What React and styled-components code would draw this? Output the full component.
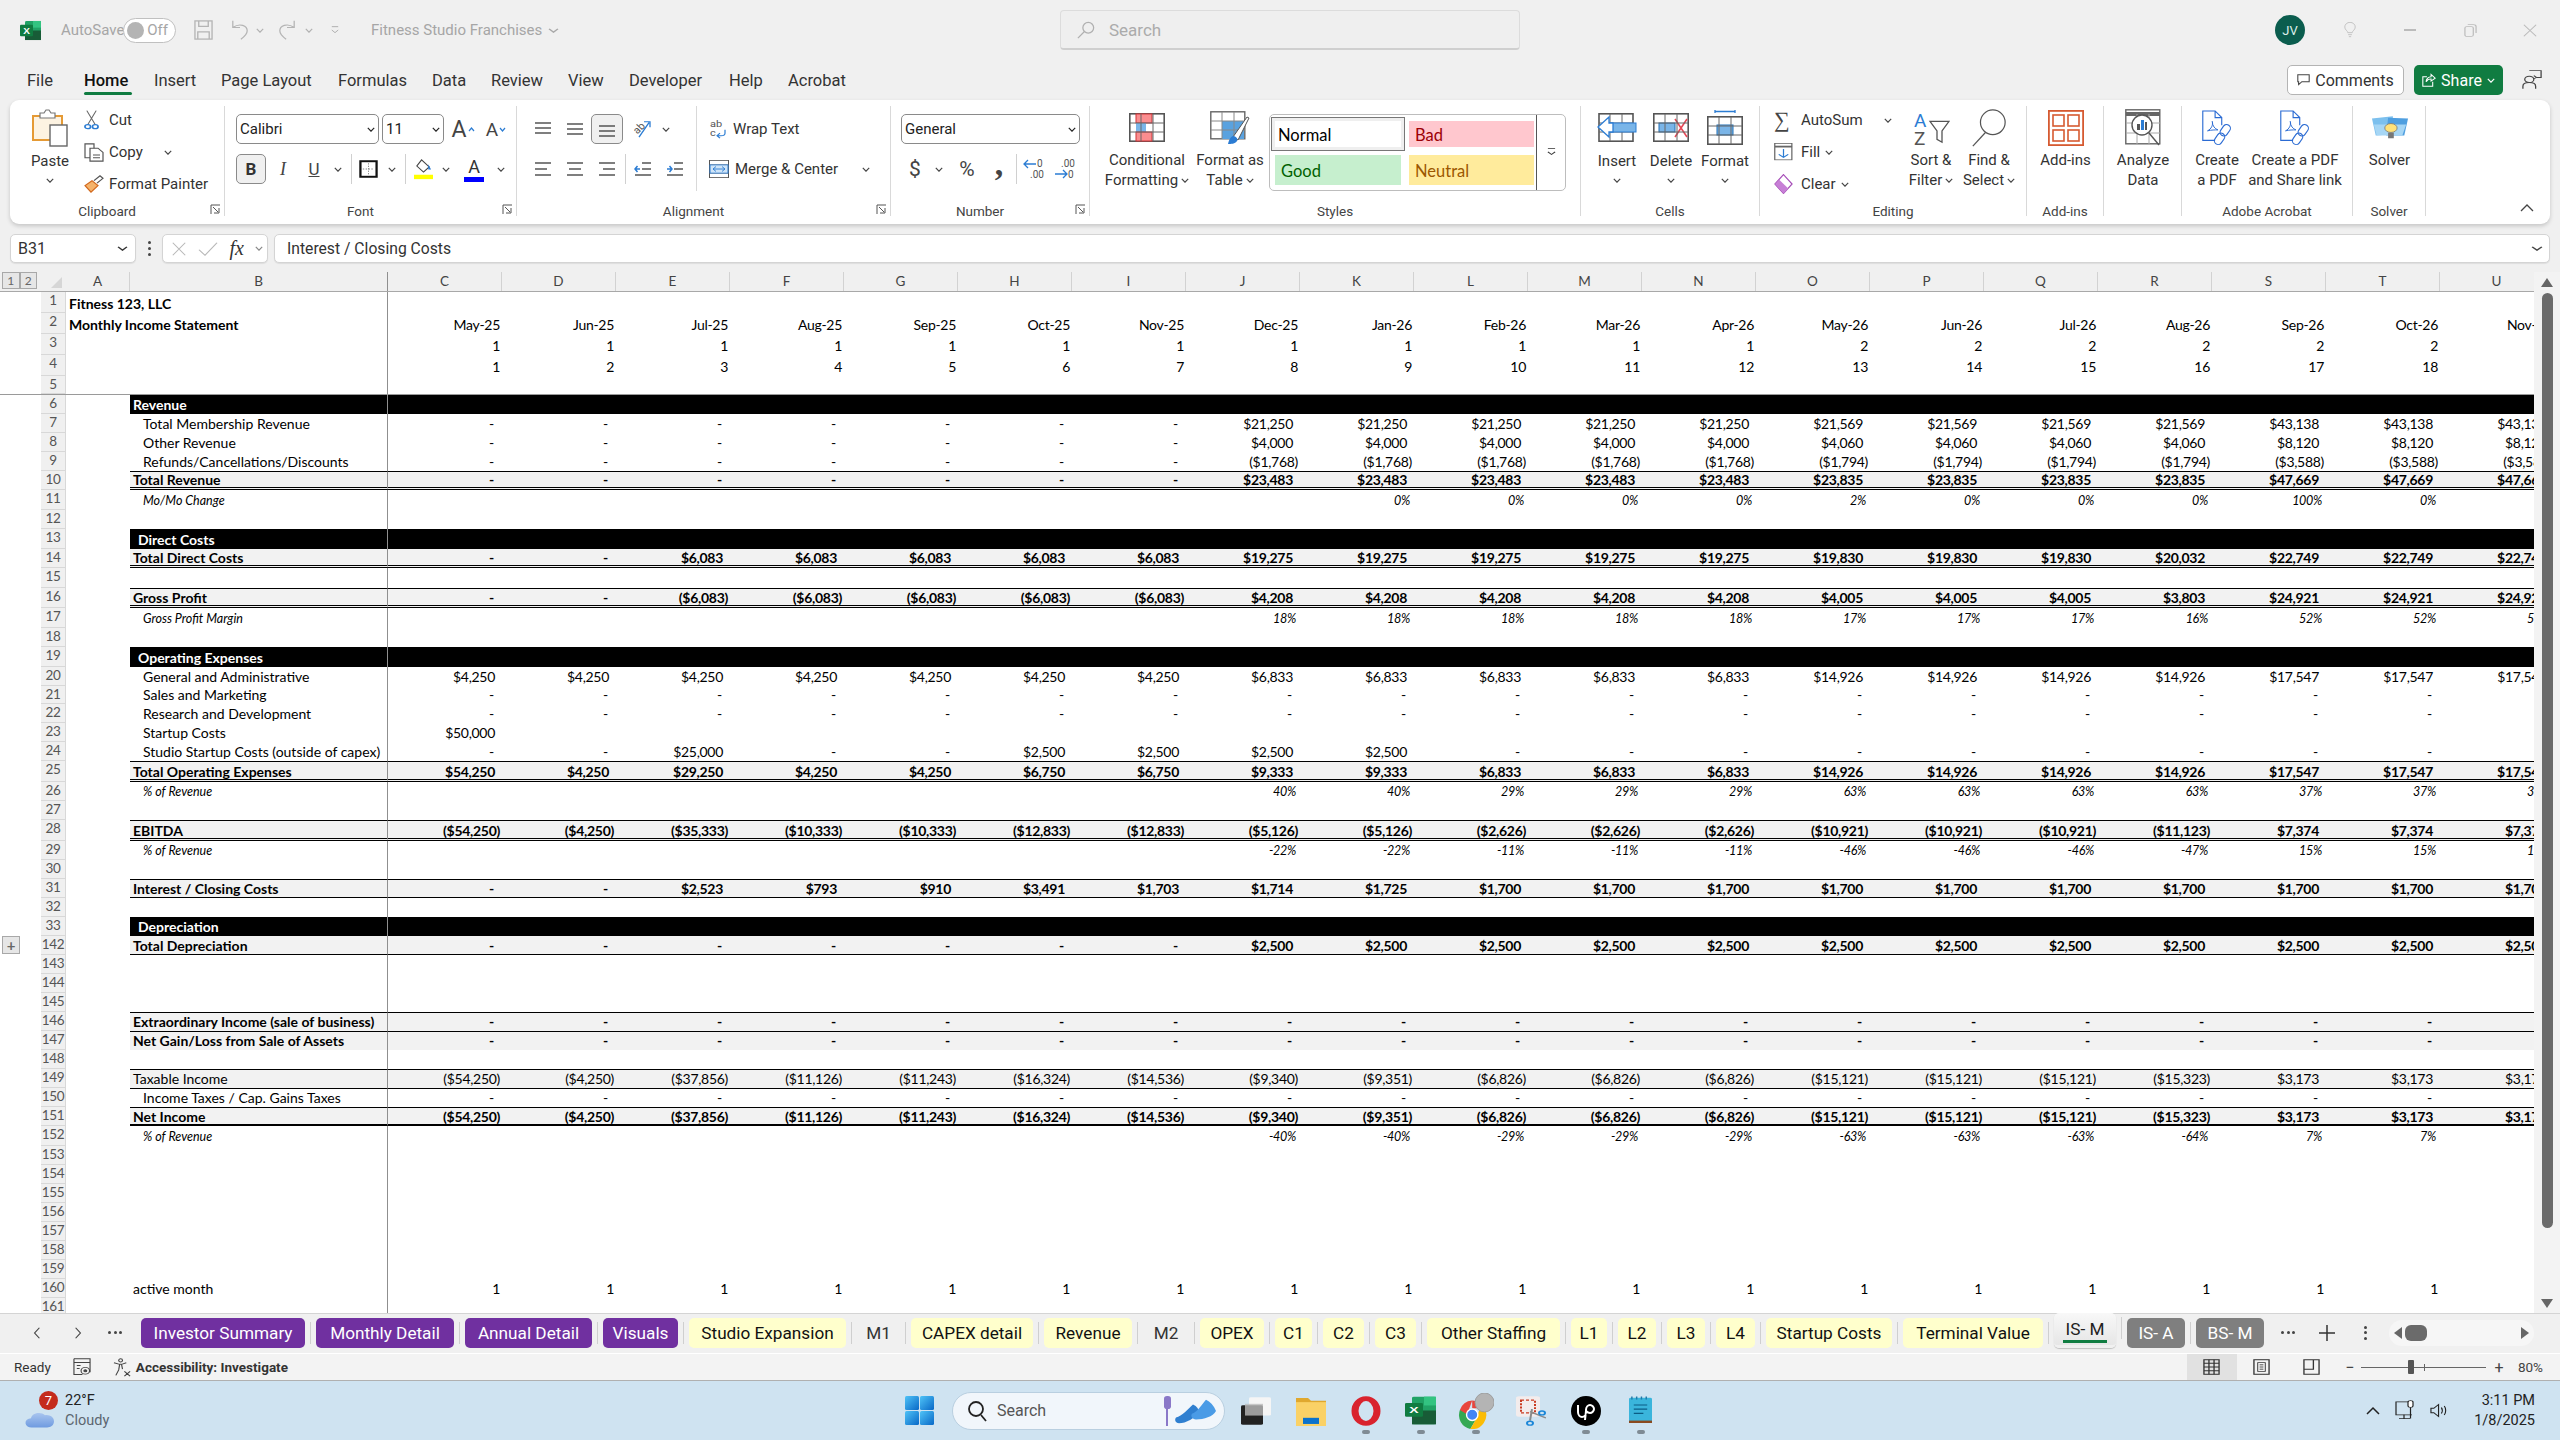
import styled, { createGlobalStyle, css } from 'styled-components';

const UI = `"Roboto", "Open Sans", sans-serif`;
const CELL = `"Lato", "Open Sans", sans-serif`;

const rep = (v, n) => Array(n).fill(v);
const MONTHS = ['May-25', 'Jun-25', 'Jul-25', 'Aug-25', 'Sep-25', 'Oct-25', 'Nov-25', 'Dec-25', 'Jan-26', 'Feb-26', 'Mar-26', 'Apr-26', 'May-26', 'Jun-26', 'Jul-26', 'Aug-26', 'Sep-26', 'Oct-26', 'Nov-26'];
const COLS = 'ABCDEFGHIJKLMNOPQRSTU'.split('');
const dashes = rep('-', 19);
const blank = (n) => rep('', n);

const taxable = ['($54,250)', '($4,250)', '($37,856)', '($11,126)', '($11,243)', '($16,324)', '($14,536)', '($9,340)', '($9,351)', '($6,826)', '($6,826)', '($6,826)', '($15,121)', '($15,121)', '($15,121)', '($15,323)', '$3,173', '$3,173', '$3,173'];

const ROWS = [
  { n: '1', h: 20.5, title: 'Fitness 123, LLC' },
  { n: '2', h: 21, title: 'Monthly Income Statement', vals: MONTHS },
  { n: '3', h: 21, vals: [...rep('1', 12), ...rep('2', 7)] },
  { n: '4', h: 21, vals: Array.from({ length: 19 }, (_, i) => String(i + 1)) },
  { n: '5', h: 19, freeze: true },
  { n: '6', h: 19.2, band: true, label: 'Revenue' },
  { n: '7', label: 'Total Membership Revenue', indent: 13, vals: [...rep('-', 7), ...rep('$21,250', 5), ...rep('$21,569', 4), ...rep('$43,138', 3)] },
  { n: '8', label: 'Other Revenue', indent: 13, vals: [...rep('-', 7), ...rep('$4,000', 5), ...rep('$4,060', 4), ...rep('$8,120', 3)] },
  { n: '9', label: 'Refunds/Cancellations/Discounts', indent: 13, vals: [...rep('-', 7), ...rep('($1,768)', 5), ...rep('($1,794)', 4), ...rep('($3,588)', 3)] },
  { n: '10', h: 19.3, label: 'Total Revenue', fill: true, bold: true, top: true, bottom: 'double', vals: [...rep('-', 7), ...rep('$23,483', 5), ...rep('$23,835', 4), ...rep('$47,669', 3)] },
  { n: '11', h: 20, label: 'Mo/Mo Change', note: true, indent: 13, vals: [...blank(8), '0%', '0%', '0%', '0%', '2%', '0%', '0%', '0%', '100%', '0%', '0%'] },
  { n: '12' },
  { n: '13', h: 20, band: true, label: 'Direct Costs', indent: 8 },
  { n: '14', h: 19.3, label: 'Total Direct Costs', fill: true, bold: true, bottom: 'double', vals: ['-', '-', ...rep('$6,083', 5), ...rep('$19,275', 5), ...rep('$19,830', 3), '$20,032', ...rep('$22,749', 3)] },
  { n: '15', h: 20 },
  { n: '16', h: 20, label: 'Gross Profit', fill: true, bold: true, top: true, bottom: 'double', vals: ['-', '-', ...rep('($6,083)', 5), ...rep('$4,208', 5), ...rep('$4,005', 3), '$3,803', ...rep('$24,921', 3)] },
  { n: '17', h: 19.4, label: 'Gross Profit Margin', note: true, indent: 13, vals: [...blank(7), ...rep('18%', 5), ...rep('17%', 3), '16%', ...rep('52%', 3)] },
  { n: '18' },
  { n: '19', h: 20, band: true, label: 'Operating Expenses', indent: 8 },
  { n: '20', h: 18.9, label: 'General and Administrative', indent: 13, vals: [...rep('$4,250', 7), ...rep('$6,833', 5), ...rep('$14,926', 4), ...rep('$17,547', 3)] },
  { n: '21', h: 18.9, label: 'Sales and Marketing', indent: 13, vals: dashes },
  { n: '22', h: 18.9, label: 'Research and Development', indent: 13, vals: dashes },
  { n: '23', h: 18.9, label: 'Startup Costs', indent: 13, vals: ['$50,000'] },
  { n: '24', h: 18.9, label: 'Studio Startup Costs (outside of capex)', indent: 13, vals: ['-', '-', '$25,000', '-', '-', '$2,500', '$2,500', '$2,500', '$2,500', ...rep('-', 10)] },
  { n: '25', h: 20.7, label: 'Total Operating Expenses', fill: true, bold: true, top: true, bottom: 'double', vals: ['$54,250', '$4,250', '$29,250', '$4,250', '$4,250', '$6,750', '$6,750', '$9,333', '$9,333', ...rep('$6,833', 3), ...rep('$14,926', 4), ...rep('$17,547', 3)] },
  { n: '26', h: 19.3, label: '% of Revenue', note: true, indent: 13, vals: [...blank(7), '40%', '40%', '29%', '29%', '29%', '63%', '63%', '63%', '63%', '37%', '37%', '37%'] },
  { n: '27' },
  { n: '28', h: 20.7, label: 'EBITDA', fill: true, bold: true, top: true, bottom: 'double', vals: ['($54,250)', '($4,250)', '($35,333)', '($10,333)', '($10,333)', '($12,833)', '($12,833)', '($5,126)', '($5,126)', '($2,626)', '($2,626)', '($2,626)', '($10,921)', '($10,921)', '($10,921)', '($11,123)', '$7,374', '$7,374', '$7,374'] },
  { n: '29', h: 19.3, label: '% of Revenue', note: true, indent: 13, vals: [...blank(7), '-22%', '-22%', '-11%', '-11%', '-11%', '-46%', '-46%', '-46%', '-47%', '15%', '15%', '15%'] },
  { n: '30' },
  { n: '31', label: 'Interest / Closing Costs', fill: true, bold: true, top: true, bottom: 'single', vals: ['-', '-', '$2,523', '$793', '$910', '$3,491', '$1,703', '$1,714', '$1,725', ...rep('$1,700', 10)] },
  { n: '32', h: 18.7 },
  { n: '33', h: 19.7, band: true, label: 'Depreciation', indent: 8 },
  { n: '142', plus: true, label: 'Total Depreciation', fill: true, bold: true, bottom: 'single', vals: [...rep('-', 7), ...rep('$2,500', 12)] },
  { n: '143', h: 18.9 },
  { n: '144', h: 18.9 },
  { n: '145', h: 18.9 },
  { n: '146', label: 'Extraordinary Income (sale of business)', fill: true, bold: true, top: true, vals: dashes },
  { n: '147', h: 19.3, label: 'Net Gain/Loss from Sale of Assets', fill: true, bold: true, top: true, vals: dashes },
  { n: '148', h: 18.6 },
  { n: '149', label: 'Taxable Income', fill: true, top: true, vals: taxable },
  { n: '150', label: 'Income Taxes / Cap. Gains Taxes', indent: 13, top: true, vals: dashes },
  { n: '151', h: 19.4, label: 'Net Income', fill: true, bold: true, top: true, bottom: 'thick', vals: taxable },
  { n: '152', h: 19.3, label: '% of Revenue', note: true, indent: 13, vals: [...blank(7), '-40%', '-40%', '-29%', '-29%', '-29%', '-63%', '-63%', '-63%', '-64%', '7%', '7%', '7%'] },
  ...['153', '154', '155', '156', '157', '158', '159'].map((n) => ({ n })),
  { n: '160', label: 'active month', vals: rep('1', 19) },
  { n: '161', h: 15 },
];

const valuePad = (v, note) => {
  if (note) return 4;
  if (v === '-') return 8;
  if (v.startsWith('$')) return 7;
  return 2;
};

const SHEET_TABS = [
  ['Investor Summary', 164, 'purple'], ['Monthly Detail', 138, 'purple'], ['Annual Detail', 127, 'purple'], ['Visuals', 75, 'purple'],
  ['Studio Expansion', 157, 'yellow'], ['M1', 43, 'plain'], ['CAPEX detail', 122, 'yellow'], ['Revenue', 88, 'yellow'], ['M2', 46, 'plain'],
  ['OPEX', 64, 'yellow'], ['C1', 37, 'yellow'], ['C2', 41, 'yellow'], ['C3', 41, 'yellow'], ['Other Staffing', 133, 'yellow'],
  ['L1', 36, 'yellow'], ['L2', 38, 'yellow'], ['L3', 38, 'yellow'], ['L4', 39, 'yellow'], ['Startup Costs', 126, 'yellow'],
  ['Terminal Value', 140, 'yellow'], ['IS- M', 62, 'active'], ['IS- A', 58, 'gray'], ['BS- M', 68, 'gray'],
];

const RIBBON_TABS = [['File', 57], ['Home', 70], ['Insert', 67], ['Page Layout', 117], ['Formulas', 94], ['Data', 59], ['Review', 77], ['View', 61], ['Developer', 100], ['Help', 59], ['Acrobat', 70]];

const NONE = 'none';

/* ---- drawn icons ---- */
const Chev = ({ c = '#444', w = 8 }) => (
  <svg width={w} height="5" viewBox="0 0 10 6" fill="none" preserveAspectRatio={NONE}><path d="M1 1l4 4 4-4" stroke={c} strokeWidth="1.5" /></svg>
);

const ExcelLogo = () => (
  <svg width="21" height="21" viewBox="0 0 21 22" preserveAspectRatio={NONE}>
    <rect x="5" y="1" width="16" height="20" rx="1.5" fill="#21a366" />
    <rect x="13" y="1" width="8" height="7" fill="#33c481" />
    <rect x="5" y="11" width="16" height="10" fill="#185c37" />
    <rect x="0" y="5" width="13" height="12" rx="1" fill="#107c41" />
    <text x="6.5" y="14.5" fontSize="10" fontWeight="700" fill="#fff" textAnchor="middle" fontFamily="Liberation Sans">X</text>
  </svg>
);
const SaveIcon = () => (
  <svg width="19" height="20" viewBox="0 0 20 22" fill="none" stroke="#b4b4b4" strokeWidth="1.4" preserveAspectRatio={NONE}><rect x="1" y="1" width="18" height="20" /><path d="M5 1v6h10V1M4 21v-8h12v8" /></svg>
);
const UndoIcon = ({ flip }) => (
  <svg width="18" height="20" viewBox="0 0 20 24" fill="none" stroke="#b4b4b4" strokeWidth="1.4" preserveAspectRatio={NONE} transform={flip ? 'scale(-1 1)' : undefined}><path d="M2 1v8h8M2 9c8-6 16-2 16 4 0 4-3 7-7 10" /></svg>
);
const QuickIcon = () => (
  <svg width="8" height="8" viewBox="0 0 10 12" fill="none" stroke="#a8a8a8" strokeWidth="1.2" preserveAspectRatio={NONE}><path d="M1 1h8M1 6l4 4 4-4" /></svg>
);
const SearchGlass = ({ c = '#b0b0b0', s = 18 }) => (
  <svg width={s} height={s} viewBox="0 0 20 20" fill="none" stroke={c} strokeWidth="1.4"><circle cx="12.5" cy="7.5" r="6" /><path d="M8 12l-7 7" /></svg>
);
const Bulb = () => (
  <svg width="12" height="16" viewBox="0 0 16 24" fill="none" stroke="#c0c0c0" strokeWidth="1.3" preserveAspectRatio={NONE}><path d="M5 16c0-3-4-4-4-8.500a7 7 0 0 1 14 0C15 12 11 13 11 16zM5.500 19h5M6.500 22h3" /></svg>
);
const CommentIcon = ({ c = '#444' }) => (
  <svg width="13" height="12" viewBox="0 0 16 17" fill="none" stroke={c} strokeWidth="1.3" preserveAspectRatio={NONE}><path d="M1 1h14v10H6l-4 4v-4H1z" /></svg>
);
const ShareIcon = () => (
  <svg width="14" height="14" viewBox="0 0 17 19" fill="none" stroke="#fff" strokeWidth="1.3" preserveAspectRatio={NONE}><path d="M6 5H1v13h12v-6M5 12c0-4 3-7 6-7V2l5 5-5 4V8c-3 0-5 2-6 4z" /></svg>
);
const FeedbackIcon = () => (
  <svg width="20" height="20" viewBox="0 0 22 32" fill="none" stroke="#444" strokeWidth="1.4" preserveAspectRatio={NONE}><path d="M8 1h13v11h-5" /><circle cx="8" cy="15" r="5" /><path d="M1 30v-4c0-4 3-6 7-6s7 2 7 6v4M13 9l3 3-3 2" /></svg>
);
const PasteIcon = () => (
  <svg width="36" height="38" viewBox="0 0 36 38" fill="none">
    <path d="M1 7h29v24H1z" fill="#fdf3e2" stroke="#e59a35" strokeWidth="2" />
    <path d="M8 7V4h4l2-3h3l2 3h4v5H8z" fill="#fff" stroke="#777" strokeWidth="1.2" />
    <rect x="18" y="16" width="17" height="21" fill="#fff" stroke="#666" strokeWidth="1.4" />
  </svg>
);
const CutIcon = () => (
  <svg width="15" height="20" viewBox="0 0 16 30" fill="none" preserveAspectRatio={NONE}><path d="M3 1l9 21M13 1L4 22" stroke="#666" strokeWidth="1.2" /><circle cx="4" cy="25" r="3" stroke="#2b7cd3" strokeWidth="1.8" /><circle cx="12" cy="25" r="3" stroke="#2b7cd3" strokeWidth="1.8" /></svg>
);
const CopyIcon = () => (
  <svg width="20" height="19" viewBox="0 0 20 22" fill="#fff" stroke="#555" strokeWidth="1.2" preserveAspectRatio={NONE}><path d="M1 1h9v16H1z" /><path d="M6 6h8l5 5v10H6z" /><path d="M9 14h7M9 17h7" /></svg>
);
const PainterIcon = () => (
  <svg width="20" height="18" viewBox="0 0 20 22" fill="none" preserveAspectRatio={NONE}><path d="M1 13l7-6 6 6-7 8z" fill="#f5b36b" stroke="#d2691e" strokeWidth="1.3" /><path d="M10 7l6-6 3 3-6 6" stroke="#555" strokeWidth="1.3" fill="#fff" /></svg>
);
const Launcher = () => (
  <svg width="11" height="11" viewBox="0 0 11 11" fill="none" stroke="#555"><path d="M1 10V1h9" /><path d="M3 3l5 5M9 4v5H4" /></svg>
);
const Caret = ({ down }) => (
  <svg width="7" height="5" viewBox="0 0 7 5" fill="none" stroke="#2b7cd3" strokeWidth="1.2"><path d={down ? 'M1 1l2.500 3L6 1' : 'M1 4l2.500-3L6 4'} /></svg>
);
const BorderIcon = () => (
  <svg width="19" height="18" viewBox="0 0 20 22" fill="none" preserveAspectRatio={NONE}><rect x="1.500" y="1.500" width="17" height="19" stroke="#111" strokeWidth="2.400" /><path d="M10 4v14M4 11h12" stroke="#777" strokeDasharray="1.500 1.500" /></svg>
);
const FillIcon = () => (
  <svg width="19" height="21" viewBox="0 0 20 24" fill="none" preserveAspectRatio={NONE}><path d="M8 1l8 8-6 6-7-7z" stroke="#444" strokeWidth="1.2" fill="#fff" /><path d="M15 6l3 6h-3z" fill="#2b7cd3" /><rect y="18" width="20" height="5" fill="#ffff00" /></svg>
);
const AlignIcon = ({ y = [4, 10, 16], x = [[1, 17], [1, 17], [1, 17]], tint }) => (
  <svg width="18" height="20" viewBox="0 0 18 20" fill="none" stroke="#555" strokeWidth="1.5">
    {y.map((v, i) => <path key={v} d={`M${x[i][0]} ${v}H${x[i][1]}`} />)}
    {tint}
  </svg>
);
const OrientIcon = () => (
  <svg width="22" height="20" viewBox="0 0 22 22" fill="none" preserveAspectRatio={NONE}><text x="4" y="15" fontSize="11" fill="#555" transform="rotate(-45 8 12)" fontFamily="Roboto">ab</text><path d="M9 20L19 4M14 3h6v6" stroke="#2b7cd3" strokeWidth="1.3" /></svg>
);
const WrapIcon = () => (
  <svg width="18" height="20" viewBox="0 0 18 24" fill="none" preserveAspectRatio={NONE}><text x="1" y="10" fontSize="11" fill="#555" fontFamily="Roboto">ab</text><text x="1" y="21" fontSize="11" fill="#555" fontFamily="Roboto">c</text><path d="M16 13v4c0 2-2 3-4 3H8m3-3l-3 3 3 3" stroke="#2b7cd3" strokeWidth="1.2" /></svg>
);
const MergeIcon = () => (
  <svg width="20" height="18" viewBox="0 0 20 22" fill="#fff" stroke="#555" preserveAspectRatio={NONE}><rect x=".5" y=".5" width="19" height="21" /><path d="M1 6h18M1 16h18" /><rect x="1" y="6" width="18" height="10" fill="#cfe4f7" stroke="#2b7cd3" /><path d="M4 11h12M7 8l-3 3 3 3M13 8l3 3-3 3" stroke="#2b7cd3" fill="none" /></svg>
);
const DecIcon = ({ flip }) => (
  <svg width="22" height="22" viewBox="0 0 22 22" fill="none">
    <text x={flip ? 7 : 14} y="9" fontSize="10" fill="#555" fontFamily="Roboto">{flip ? '.00' : '0'}</text>
    <text x={flip ? 14 : 7} y="20" fontSize="10" fill="#555" fontFamily="Roboto">{flip ? '0' : '.00'}</text>
    {flip
      ? <path d="M1 16h12M9 12l4 4-4 4" stroke="#2b7cd3" strokeWidth="1.3" />
      : <path d="M13 6H1M5 2L1 6l4 4" stroke="#2b7cd3" strokeWidth="1.3" />}
  </svg>
);
const SheetGrid = ({ children }) => (
  <svg width="36" height="30" viewBox="0 0 36 30" fill="none">
    <rect x=".8" y=".8" width="34.400" height="27.400" fill="#fff" stroke="#555" strokeWidth="1.6" />
    {children}
    <path d="M12 1v27M24 1v27M1 10h34M1 19h34" stroke="#666" strokeWidth="1" />
  </svg>
);
const CondIcon = () => (
  <SheetGrid><rect x="7" y="1" width="16" height="9" fill="#fa8d8f" stroke="#d13438" /><rect x="7" y="10" width="10" height="9" fill="#7ab5e8" /><rect x="7" y="19" width="16" height="9" fill="#fa8d8f" stroke="#d13438" /></SheetGrid>
);
const TableIcon = () => (
  <svg width="40" height="34" viewBox="0 0 40 34" fill="none">
    <rect x=".8" y=".8" width="34" height="27" fill="#fff" stroke="#666" strokeWidth="1.4" />
    <rect x="12" y="10" width="22" height="18" fill="#5aa2df" />
    <path d="M12 1v27M24 1v27M1 10h34M1 19h34" stroke="#888" />
    <path d="M23 26L37 6l2 1-11 22z" fill="#fff" stroke="#555" />
    <path d="M18 33c1-5 3-8 6-8 3 1 4 3 3 5-2 3-6 3-9 3z" fill="#2b7cd3" />
  </svg>
);
const InsertIcon = () => (
  <svg width="40" height="30" viewBox="0 0 40 30" fill="none">
    <rect x="2" y=".8" width="34" height="27.400" fill="#fff" stroke="#555" strokeWidth="1.6" />
    <path d="M13 1v27M25 1v27M2 10h34M2 19h34" stroke="#666" />
    <rect x="13" y="10" width="26" height="9" fill="#7ab5e8" stroke="#2b7cd3" />
    <path d="M12 4L1 14l11 10v-5h4v-9h-4z" fill="#fff" stroke="#2b7cd3" strokeWidth="1.300" />
  </svg>
);
const DeleteIcon = () => (
  <SheetGrid><rect x="6" y="10" width="16" height="9" fill="#7ab5e8" stroke="#1f6fb5" /><path d="M22 6l12 18M34 6L22 24" stroke="#e74856" strokeWidth="1.600" /></SheetGrid>
);
const FormatIcon = () => (
  <svg width="36" height="36" viewBox="0 0 36 36" fill="none"><path d="M8 1.500h20M8 0v3M28 0v3" stroke="#2b7cd3" strokeWidth="1.300" /><rect x=".8" y="6.800" width="34.400" height="27.400" fill="#fff" stroke="#555" strokeWidth="1.600" /><rect x="10" y="15" width="16" height="10" fill="#7ab5e8" stroke="#1f6fb5" /><path d="M12 7v27M24 7v27M1 16h34M1 25h34" stroke="#666" /></svg>
);
const FillDown = () => (
  <svg width="19" height="18" viewBox="0 0 20 30" fill="#fff" stroke="#666" strokeWidth="1.300" preserveAspectRatio={NONE}><rect x=".8" y="1" width="18" height="27" /><path d="M1 6h18" strokeWidth="3" /><path d="M10 10v14M5 19l5 5 5-5" stroke="#2b7cd3" fill="none" /></svg>
);
const ClearIcon = () => (
  <svg width="19" height="20" viewBox="0 0 20 32" fill="none" preserveAspectRatio={NONE}><path d="M10 1l9 15-9 15L1 16z" fill="#fff" stroke="#a54bb7" strokeWidth="1.500" /><path d="M5.500 9L15 23l-5 8-9-15z" fill="#c77fd6" /></svg>
);
const SortIcon = () => (
  <svg width="38" height="36" viewBox="0 0 38 38" fill="none" preserveAspectRatio={NONE}>
    <text x="2" y="18" fontSize="19" fill="#2b7cd3" fontFamily="Roboto">A</text>
    <text x="2" y="37" fontSize="19" fill="#555" fontFamily="Roboto">Z</text>
    <path d="M18 12h19l-7 10v12l-5-3v-9z" fill="#fff" stroke="#555" strokeWidth="1.300" />
  </svg>
);
const FindIcon = () => (
  <svg width="36" height="38" viewBox="0 0 36 40" fill="none" stroke="#555" strokeWidth="1.300"><circle cx="22" cy="14" r="13" fill="#fff" /><path d="M14 25L1 39" /></svg>
);
const AddInsIcon = () => (
  <svg width="36" height="36" viewBox="0 0 36 36" fill="#fff" stroke="#d65a31" strokeWidth="1.600"><rect x=".8" y=".8" width="34.400" height="34.400" strokeWidth="2" /><rect x="5" y="5" width="11" height="11" /><rect x="20" y="5" width="11" height="11" /><rect x="5" y="20" width="11" height="11" /><rect x="20" y="20" width="11" height="11" /></svg>
);
const AnalyzeIcon = () => (
  <svg width="36" height="38" viewBox="0 0 36 38" fill="none">
    <rect x=".8" y=".8" width="34" height="34" fill="#fff" stroke="#666" strokeWidth="1.400" />
    <path d="M1 5h34" stroke="#666" strokeWidth="4" /><path d="M12 5v30M24 5v30M1 14h34M1 24h34" stroke="#aaa" />
    <circle cx="17" cy="16" r="10" fill="#fff" stroke="#555" strokeWidth="1.400" />
    <path d="M24 24l10 12" stroke="#555" strokeWidth="1.400" />
    <rect x="12" y="15" width="3" height="6" fill="#555" /><rect x="16" y="11" width="3" height="10" fill="#2b7cd3" /><rect x="20" y="13" width="2" height="8" fill="#555" />
  </svg>
);
const PdfIcon = () => (
  <svg width="32" height="36" viewBox="0 0 32 38" fill="none" stroke="#2b6bd3" strokeWidth="1.200">
    <path d="M14 32H1V1h13l7 7v8M14 1v7h7" fill="#fff" />
    <path d="M6 22c4-2 6-6 5-10 0 5 3 8 6 9-3 0-7 0-11 1z" strokeWidth="1" />
    <rect x="21" y="15" width="8" height="13" rx="4" transform="rotate(35 25 21)" />
    <rect x="15" y="24" width="8" height="13" rx="4" transform="rotate(35 19 30)" />
  </svg>
);
const SolverIcon = () => (
  <svg width="38" height="26" viewBox="0 0 40 38" fill="none" preserveAspectRatio={NONE}>
    <path d="M1 5l22-3v26l-18 2z" fill="#7cc0ee" /><path d="M18 4l21 1-4 25H16z" fill="#4f9fe0" /><path d="M3 14h34l-4 16H6z" fill="#a6d6f5" />
    <circle cx="21" cy="19" r="6.500" fill="#ffe27a" stroke="#777" /><path d="M18 26h6v8h-6z" fill="#777" />
  </svg>
);
const Macro = () => (
  <svg width="18" height="18" viewBox="0 0 19 24" fill="none" stroke="#444" strokeWidth="1.200" preserveAspectRatio={NONE}><path d="M1 1h17v18" /><path d="M1 1v21h9M1 6h17M4 10h4M4 14h3" /><circle cx="13" cy="17" r="4.500" /><circle cx="13" cy="17" r="1.500" fill="#444" /></svg>
);
const Access = () => (
  <svg width="19" height="19" viewBox="0 0 20 24" fill="none" stroke="#444" strokeWidth="1.200" preserveAspectRatio={NONE}><circle cx="8" cy="3" r="2" /><path d="M1 6l6 2h2l5-2M7 8l-1 7-3 7M9 8l1 6M12 17l6 6M18 17l-6 6" /></svg>
);
const ViewNormal = () => (
  <svg width="17" height="16" viewBox="0 0 18 22" fill="none" stroke="#333" strokeWidth="1.400" preserveAspectRatio={NONE}><rect x="1" y="1" width="16" height="20" /><path d="M6.300 1v20M11.700 1v20M1 6h16M1 11h16M1 16h16" /></svg>
);
const ViewLayout = () => (
  <svg width="17" height="16" viewBox="0 0 18 22" fill="none" stroke="#333" strokeWidth="1.400" preserveAspectRatio={NONE}><rect x="1" y="1" width="16" height="20" /><rect x="5" y="5" width="8" height="12" strokeWidth="1" /><path d="M7 8h4M7 11h4M7 14h4" strokeWidth="1" /></svg>
);
const ViewBreak = () => (
  <svg width="17" height="16" viewBox="0 0 18 22" fill="none" stroke="#333" strokeWidth="1.400" preserveAspectRatio={NONE}><path d="M1 1h16v20H1zM1 14h10V1" /></svg>
);
const Cloud = () => (
  <svg width="30" height="20" viewBox="0 0 30 26" preserveAspectRatio={NONE}><defs><linearGradient id="cl" x1="0" y1="0" x2="0" y2="1"><stop offset="0" stopColor="#a9c5ef" /><stop offset="1" stopColor="#6f9be0" /></linearGradient></defs><path d="M7 24a6 6 0 0 1-1-12c1-7 10-9 14-4 5-1 9 3 9 8 0 5-3 8-7 8z" fill="url(#cl)" /></svg>
);
const WinLogo = () => (
  <svg width="29" height="29" viewBox="0 0 29 29"><defs><linearGradient id="wn" x1="0" y1="0" x2="1" y2="1"><stop offset="0" stopColor="#4fc3f7" /><stop offset="1" stopColor="#0868c7" /></linearGradient></defs><rect width="14" height="14" fill="url(#wn)" rx="1.500" /><rect x="15" width="14" height="14" fill="url(#wn)" rx="1.500" /><rect y="15" width="14" height="14" fill="url(#wn)" rx="1.500" /><rect x="15" y="15" width="14" height="14" fill="url(#wn)" rx="1.500" /></svg>
);
const Shoes = () => (
  <svg width="56" height="32" viewBox="0 0 56 34" preserveAspectRatio={NONE}><rect x="2" y="1" width="7" height="14" rx="3" fill="#8a78c8" /><path d="M5 15v18" stroke="#8a78c8" strokeWidth="2" /><path d="M14 24c6-2 12-9 17-14 4 2 6 5 6 9-4 5-13 11-20 11-3 0-5-3-3-6z" fill="#2f7fd0" /><path d="M30 20c6-3 10-10 14-15 4 2 8 6 10 12-3 6-12 9-20 9-3 0-6-3-4-6z" fill="#4a9be6" /></svg>
);
const TaskView = () => (
  <svg width="30" height="30" viewBox="0 0 30 46" preserveAspectRatio={NONE}><rect x="8" y="2" width="22" height="28" rx="2" fill="#f5f5f5" /><rect x="0" y="14" width="22" height="30" rx="2" fill="#222" /><rect x="4" y="12" width="18" height="18" fill="#bbb" opacity=".8" /></svg>
);
const Folder = () => (
  <svg width="30" height="30" viewBox="0 0 30 44" preserveAspectRatio={NONE}><path d="M0 3h12l3 4h15v37H0z" fill="#e0a82e" /><path d="M0 9h30v35H0z" fill="#fad166" /><rect x="7" y="32" width="16" height="9" fill="#0a72cc" /></svg>
);
const Opera = () => (
  <svg width="30" height="30" viewBox="0 0 30 46" fill="none" preserveAspectRatio={NONE}><ellipse cx="15" cy="23" rx="11" ry="19" stroke="#d9232e" strokeWidth="7" /></svg>
);
const ExcelTask = () => (
  <svg width="31" height="29" viewBox="0 0 31 46" preserveAspectRatio={NONE}><rect x="7" y="1" width="24" height="44" rx="2" fill="#21a366" /><rect x="19" y="1" width="12" height="14" fill="#33c481" /><rect x="7" y="23" width="24" height="22" fill="#185c37" /><rect y="11" width="18" height="22" rx="1.500" fill="#107c41" /><text x="9" y="27" fontSize="14" fontWeight="700" fill="#fff" textAnchor="middle" fontFamily="Liberation Sans">X</text></svg>
);
const Chrome = () => (
  <svg width="36" height="36" viewBox="0 0 38 38"><path d="M15 8a15 15 0 0 1 13 8H15z" fill="#e8453c" /><path d="M2 18A15 15 0 0 1 15 8l-3 8-5 14z" fill="#e8453c" /><path d="M2 18a15 15 0 0 0 11 20l7-12-8-2z" fill="#34a853" /><path d="M28 16a15 15 0 0 1-15 22l7-12 3-10z" fill="#fbbc05" /><circle cx="15" cy="23" r="6" fill="#4285f4" stroke="#fff" strokeWidth="1.500" /><rect x="18" y="0" width="20" height="20" rx="10" fill="#b4b4b4" stroke="#9c9c9c" /></svg>
);
const Snip = () => (
  <svg width="30" height="32" viewBox="0 0 30 50" fill="none" preserveAspectRatio={NONE}><rect x="0" y="2" width="24" height="32" rx="3" fill="#f3ecec" /><rect x="5" y="8" width="14" height="20" stroke="#c93a20" strokeWidth="2" strokeDasharray="3 2" /><path d="M16 22l-2 18M14 26l16 10" stroke="#8a8a8a" strokeWidth="2" /><circle cx="14" cy="44" r="3" stroke="#1a86d8" strokeWidth="2" /><circle cx="26" cy="28" r="3" stroke="#1a86d8" strokeWidth="2" /></svg>
);
const Upwork = () => (
  <svg width="30" height="30" viewBox="0 0 30 30"><circle cx="15" cy="15" r="15" fill="#000" /><path d="M7 9v7c0 3 2 5 4 5s4-2 4-5v-2c0-3 2-5 4-5s4 2 4 4-2 4-4 4-3-1-4-2l-1 9" stroke="#fff" strokeWidth="2" fill="none" /></svg>
);
const Notepad = () => (
  <svg width="23" height="30" viewBox="0 0 24 50" preserveAspectRatio={NONE}><rect x="0" y="3" width="24" height="40" rx="2" fill="#3ab5dc" /><rect x="0" y="41" width="24" height="4" fill="#8a4a20" /><path d="M3 1v5M8 1v5M13 1v5M18 1v5" stroke="#2079a8" strokeWidth="1.500" /><path d="M5 15h14M5 22h14M5 29h10" stroke="#0b5d85" strokeWidth="2" /></svg>
);
const Monitor = () => (
  <svg width="20" height="21" viewBox="0 0 20 34" fill="none" stroke="#222" strokeWidth="1.200" preserveAspectRatio={NONE}><path d="M15 3H1v21h16" /><path d="M9 24v6M4 30h11" /><rect x="13" y="1" width="5" height="11" rx="2.500" fill="#fff" /><path d="M15.500 12v18" /></svg>
);
const Speaker = () => (
  <svg width="19" height="15" viewBox="0 0 20 20" fill="none" stroke="#222" strokeWidth="1.200" preserveAspectRatio={NONE}><path d="M1 7h3l5-5v16l-5-5H1zM12 6c1 2 1 6 0 8M15 4c2 3 2 9 0 12" /></svg>
);

/* ---- app ---- */
function App() {
  return (
    <Page>
      <GlobalStyle />
      <TitleBar>
        <QuickBar>
          <ExcelLogo />
          <AutoSave>AutoSave</AutoSave>
          <Toggle>Off</Toggle>
          <Slot $w={54}><SaveIcon /></Slot>
          <Slot $w={20}><UndoIcon /></Slot>
          <Slot $w={20}><Chev c="#b0b0b0" /></Slot>
          <Slot $w={34}><UndoIcon flip /></Slot>
          <Slot $w={10}><Chev c="#b0b0b0" /></Slot>
          <Slot $w={42}><QuickIcon /></Slot>
          <DocTitle>Fitness Studio Franchises</DocTitle>
          <Chev c="#a8a8a8" w={11} />
        </QuickBar>
        <SearchBox><SearchGlass />Search</SearchBox>
        <WindowBar>
          <Slot $w={60}><Avatar>JV</Avatar></Slot>
          <Slot $w={60}><Bulb /></Slot>
          <Slot $w={60}><WinGlyph /></Slot>
          <Slot $w={60}>
            <svg width="13" height="13" viewBox="0 0 14 20" fill="none" stroke="#bbb" strokeWidth="1.300" preserveAspectRatio={NONE}><rect x="1" y="4" width="9" height="15" rx="2" /><path d="M4 1h6c2 0 3 1 3 3v10" /></svg>
          </Slot>
          <Slot $w={60}>
            <svg width="14" height="13" viewBox="0 0 16 20" fill="none" stroke="#bbb" strokeWidth="1.300" preserveAspectRatio={NONE}><path d="M1 1l14 18M15 1L1 19" /></svg>
          </Slot>
        </WindowBar>
      </TitleBar>

      <TabBar>
        <TabList>
          {RIBBON_TABS.map(([t, w]) => <RibbonTab key={t} $w={w} $active={t === 'Home'}>{t}</RibbonTab>)}
        </TabList>
        <TabActions>
          <CommentsBtn><CommentIcon />Comments</CommentsBtn>
          <ShareBtn><ShareIcon />Share<Chev c="#fff" /></ShareBtn>
          <Slot $w={57}><FeedbackIcon /></Slot>
        </TabActions>
      </TabBar>

      <Ribbon>
        <Group $w={215}>
          <Body $pad={10}>
            <BigBtn $w={60} $small>
              <BigIcon><PasteIcon /></BigIcon>
              <span>Paste</span>
              <ChevLine><Chev /></ChevLine>
            </BigBtn>
            <Stack $left={4}>
              <StackRow><IconCol><CutIcon /></IconCol>Cut</StackRow>
              <StackRow><IconCol><CopyIcon /></IconCol>Copy<Gap $w={21} /><Chev /></StackRow>
              <StackRow><IconCol><PainterIcon /></IconCol>Format Painter</StackRow>
            </Stack>
          </Body>
          <Label $launcher>Clipboard<LaunchSpot><Launcher /></LaunchSpot></Label>
        </Group>

        <Group $w={292}>
          <Body $pad={11} $col>
            <ToolRow>
              <Picker $w={143}>Calibri<Chev c="#222" /></Picker>
              <Picker $w={62} $left={3}>11<Chev c="#222" /></Picker>
              <Tool $w={38}><GlyphA $size={23}>A</GlyphA><Caret /></Tool>
              <Tool $w={28}><GlyphA $size={19}>A</GlyphA><Caret down /></Tool>
            </ToolRow>
            <ToolRow>
              <Tool $w={30} $pressed><BoldGlyph>B</BoldGlyph></Tool>
              <Tool $w={34}><ItalicGlyph>I</ItalicGlyph></Tool>
              <Tool $w={28}><UnderGlyph>U</UnderGlyph></Tool>
              <Tool $w={20}><Chev /></Tool>
              <VSep />
              <Tool $w={28}><BorderIcon /></Tool>
              <Tool $w={20}><Chev /></Tool>
              <VSep />
              <Tool $w={30}><FillIcon /></Tool>
              <Tool $w={16}><Chev /></Tool>
              <Tool $w={40}><ColorA>A</ColorA></Tool>
              <Tool $w={14}><Chev /></Tool>
            </ToolRow>
          </Body>
          <Label $launcher>Font<LaunchSpot><Launcher /></LaunchSpot></Label>
        </Group>

        <Group $w={374}>
          <Body $pad={10}>
            <AlignCol>
              <ToolRow>
                <Tool $w={32}><AlignIcon y={[4, 9, 14]} /></Tool>
                <Tool $w={32}><AlignIcon y={[5, 10, 15]} /></Tool>
                <Tool $w={32} $pressed><AlignIcon y={[7, 12, 17]} /></Tool>
                <Tool $w={36}><OrientIcon /></Tool>
                <Tool $w={14}><Chev /></Tool>
              </ToolRow>
              <ToolRow>
                <Tool $w={32}><AlignIcon y={[4, 10, 16]} x={[[1, 17], [1, 13], [1, 17]]} /></Tool>
                <Tool $w={32}><AlignIcon y={[4, 10, 16]} x={[[1, 17], [3, 15], [1, 17]]} /></Tool>
                <Tool $w={32}><AlignIcon y={[4, 10, 16]} x={[[1, 17], [5, 17], [1, 17]]} /></Tool>
                <VSep $w={4} />
                <Tool $w={32}><AlignIcon y={[4, 10, 16]} x={[[8, 17], [8, 17], [1, 17]]} tint={<path d="M6 10H1m2.500-3L1 10l2.500 3" stroke="#2b7cd3" />} /></Tool>
                <Tool $w={32}><AlignIcon y={[4, 10, 16]} x={[[8, 17], [8, 17], [1, 17]]} tint={<path d="M1 10h5M3.500 7L6 10l-2.500 3" stroke="#2b7cd3" />} /></Tool>
              </ToolRow>
            </AlignCol>
            <WrapCol>
              <ToolRow $tall><WrapIcon /><WrapText>Wrap Text</WrapText></ToolRow>
              <ToolRow $tall><MergeIcon /><WrapText>Merge &amp; Center</WrapText><Gap $w={12} /><Chev /></ToolRow>
            </WrapCol>
          </Body>
          <Label $launcher>Alignment<LaunchSpot><Launcher /></LaunchSpot></Label>
        </Group>

        <Group $w={199}>
          <Body $pad={10} $col>
            <ToolRow><Picker $w={179}>General<Chev c="#222" /></Picker></ToolRow>
            <ToolRow>
              <Tool $w={28}><NumGlyph>$</NumGlyph></Tool>
              <Tool $w={20}><Chev /></Tool>
              <Tool $w={36}><NumGlyph>%</NumGlyph></Tool>
              <Tool $w={28}><CommaGlyph>,</CommaGlyph></Tool>
              <VSep />
              <Tool $w={30}><DecIcon /></Tool>
              <Tool $w={32}><DecIcon flip /></Tool>
            </ToolRow>
          </Body>
          <Label $launcher>Number<LaunchSpot><Launcher /></LaunchSpot></Label>
        </Group>

        <Group $w={491}>
          <Body $pad={12}>
            <BigBtn $w={90}><BigIcon><CondIcon /></BigIcon><span>Conditional</span><span>Formatting <Chev /></span></BigBtn>
            <BigBtn $w={76}><BigIcon><TableIcon /></BigIcon><span>Format as</span><span>Table <Chev /></span></BigBtn>
            <Gallery>
              <StyleGrid>
                <StyleCell $kind="normal">Normal</StyleCell>
                <StyleCell $kind="bad">Bad</StyleCell>
                <StyleCell $kind="good">Good</StyleCell>
                <StyleCell $kind="neutral">Neutral</StyleCell>
              </StyleGrid>
              <GalleryMore>
                <svg width="9" height="9" viewBox="0 0 10 14" fill="none" stroke="#333" strokeWidth="1.300" preserveAspectRatio={NONE}><path d="M1 1h8M1 6l4 4 4-4" /></svg>
              </GalleryMore>
            </Gallery>
          </Body>
          <Label>Styles</Label>
        </Group>

        <Group $w={179}>
          <Body $pad={9}>
            <BigBtn $w={54} $small><BigIcon><InsertIcon /></BigIcon><span>Insert</span><ChevLine><Chev /></ChevLine></BigBtn>
            <BigBtn $w={54} $small><BigIcon><DeleteIcon /></BigIcon><span>Delete</span><ChevLine><Chev /></ChevLine></BigBtn>
            <BigBtn $w={54} $small><BigIcon><FormatIcon /></BigIcon><span>Format</span><ChevLine><Chev /></ChevLine></BigBtn>
          </Body>
          <Label>Cells</Label>
        </Group>

        <Group $w={267}>
          <Body $pad={14}>
            <Stack $left={0} $w={127}>
              <StackRow><IconCol $w={27}><SigmaGlyph>∑</SigmaGlyph></IconCol>AutoSum<Gap $w={21} /><Chev /></StackRow>
              <StackRow><IconCol $w={27}><FillDown /></IconCol>Fill<Gap $w={5} /><Chev /></StackRow>
              <StackRow><IconCol $w={27}><ClearIcon /></IconCol>Clear<Gap $w={5} /><Chev /></StackRow>
            </Stack>
            <BigBtn $w={60}><BigIcon><SortIcon /></BigIcon><span>Sort &amp;</span><span>Filter <Chev /></span></BigBtn>
            <BigBtn $w={56}><BigIcon><FindIcon /></BigIcon><span>Find &amp;</span><span>Select <Chev /></span></BigBtn>
          </Body>
          <Label>Editing</Label>
        </Group>

        <Group $w={77}>
          <Body><BigBtn $w={77}><BigIcon><AddInsIcon /></BigIcon><span>Add-ins</span></BigBtn></Body>
          <Label>Add-ins</Label>
        </Group>

        <Group $w={78}>
          <Body><BigBtn $w={78}><BigIcon><AnalyzeIcon /></BigIcon><span>Analyze</span><span>Data</span></BigBtn></Body>
          <Label />
        </Group>

        <Group $w={171}>
          <Body>
            <BigBtn $w={70}><BigIcon><PdfIcon /></BigIcon><span>Create</span><span>a PDF</span></BigBtn>
            <BigBtn $w={86}><BigIcon><PdfIcon /></BigIcon><span>Create a PDF</span><span>and Share link</span></BigBtn>
          </Body>
          <Label>Adobe Acrobat</Label>
        </Group>

        <Group $w={73}>
          <Body><BigBtn $w={73}><BigIcon><SolverIcon /></BigIcon><span>Solver</span></BigBtn></Body>
          <Label>Solver</Label>
        </Group>
        <Collapse>
          <svg width="14" height="8" viewBox="0 0 14 8" fill="none" stroke="#444" strokeWidth="1.300"><path d="M1 7l6-6 6 6" /></svg>
        </Collapse>
      </Ribbon>

      <FormulaBar>
        <NameBox>B31<Chev c="#333" w={11} /></NameBox>
        <Dots><Dot /><Dot /><Dot /></Dots>
        <FxBox>
          <svg width="16" height="14" viewBox="0 0 18 18" fill="none" stroke="#b8b8b8" strokeWidth="1.300" preserveAspectRatio={NONE}><path d="M2 1l14 16M16 1L2 17" /></svg>
          <svg width="20" height="14" viewBox="0 0 20 18" fill="none" stroke="#b8b8b8" strokeWidth="1.300" preserveAspectRatio={NONE}><path d="M1 10l6 7L19 1" /></svg>
          <FxGlyph>fx</FxGlyph>
          <Chev c="#888" />
        </FxBox>
        <FormulaInput>Interest / Closing Costs<Chev c="#444" w={12} /></FormulaInput>
      </FormulaBar>

      <Sheet>
        <GridPane>
          <ColHead>
            <Gutter><OutlineBtn>1</OutlineBtn><OutlineBtn>2</OutlineBtn></Gutter>
            <Corner />
            {COLS.map((c) => <ColLetter key={c} $freeze={c === 'B'}>{c}</ColLetter>)}
          </ColHead>
          {ROWS.map((r) => (
            <SheetRow key={r.n} $h={r.h || 19} $freeze={r.freeze}>
              <Gutter>{r.plus && <PlusBtn>+</PlusBtn>}</Gutter>
              <RowNum>{r.n}</RowNum>
              {r.title ? (
                <TitleCell>{r.title}</TitleCell>
              ) : (
                <>
                  <div />
                  <LabelCell $band={r.band} $fill={r.fill} $bold={r.bold} $top={r.top} $bottom={r.bottom} $note={r.note} $indent={r.indent || 3}>
                    {r.label}
                  </LabelCell>
                </>
              )}
              {MONTHS.map((m, i) => {
                const v = (r.vals && r.vals[i]) || '';
                return (
                  <ValueCell key={m} $band={r.band} $fill={r.fill} $bold={r.bold} $top={r.top} $bottom={r.bottom} $note={r.note} $pad={valuePad(v, r.note)}>
                    {v}
                  </ValueCell>
                );
              })}
            </SheetRow>
          ))}
        </GridPane>
        <VScroll>
          <Tri $up />
          <VThumb />
          <Tri />
        </VScroll>
      </Sheet>

      <TabStrip>
        <NavArrows>
          <Slot $w={41}><svg width="8" height="12" viewBox="0 0 10 16" fill="none" stroke="#444" strokeWidth="1.500" preserveAspectRatio={NONE}><path d="M8 1L2 8l6 7" /></svg></Slot>
          <Slot $w={41}><svg width="8" height="12" viewBox="0 0 10 16" fill="none" stroke="#444" strokeWidth="1.500" preserveAspectRatio={NONE}><path d="M2 1l6 7-6 7" /></svg></Slot>
          <Slot $w={34}><DotRun><Dot /><Dot /><Dot /></DotRun></Slot>
        </NavArrows>
        <Tabs>
          {SHEET_TABS.map(([t, w, tone]) => <SheetTab key={t} $w={w} $tone={tone}>{t}</SheetTab>)}
        </Tabs>
        <Slot $w={48}><DotRun><Dot /><Dot /><Dot /></DotRun></Slot>
        <Slot $w={30}>
          <svg width="16" height="16" viewBox="0 0 16 16" stroke="#333" strokeWidth="1.500"><path d="M8 0v16M0 8h16" /></svg>
        </Slot>
        <Slot $w={47}><DotRun $v><Dot /><Dot /><Dot /></DotRun></Slot>
        <HScroll>
          <HTri $left />
          <HThumb />
          <HTri />
        </HScroll>
      </TabStrip>

      <StatusBar>
        <StatusLeft>
          <span>Ready</span>
          <Macro />
          <AccessWrap><Access /><b>Accessibility: Investigate</b></AccessWrap>
        </StatusLeft>
        <StatusRight>
          <ViewBtn $active><ViewNormal /></ViewBtn>
          <ViewBtn><ViewLayout /></ViewBtn>
          <ViewBtn><ViewBreak /></ViewBtn>
          <ZoomSign>−</ZoomSign>
          <ZoomTrack><ZoomThumb /><ZoomTick /></ZoomTrack>
          <ZoomSign>+</ZoomSign>
          <ZoomPct>80%</ZoomPct>
        </StatusRight>
      </StatusBar>

      <Taskbar>
        <Weather>
          <CloudWrap><Cloud /><Badge>7</Badge></CloudWrap>
          <WeatherText><span>22°F</span><small>Cloudy</small></WeatherText>
        </Weather>
        <WinLogo />
        <TaskSearch>
          <svg width="20" height="22" viewBox="0 0 20 22" fill="none" stroke="#222" strokeWidth="1.800"><circle cx="9" cy="9" r="7" /><path d="M14 15l5 6" /></svg>
          <span>Search</span>
          <ShoeSpot><Shoes /></ShoeSpot>
        </TaskSearch>
        <TaskSlot><TaskView /></TaskSlot>
        <TaskSlot><Folder /></TaskSlot>
        <TaskSlot $dot><Opera /></TaskSlot>
        <TaskSlot $dot><ExcelTask /></TaskSlot>
        <TaskSlot $dot><Chrome /></TaskSlot>
        <TaskSlot><Snip /></TaskSlot>
        <TaskSlot $dot><Upwork /></TaskSlot>
        <TaskSlot $dot><Notepad /></TaskSlot>
        <Tray>
          <svg width="14" height="9" viewBox="0 0 14 9" fill="none" stroke="#222" strokeWidth="1.500"><path d="M1 8l6-6 6 6" /></svg>
          <Monitor />
          <Speaker />
          <Clock><span>3:11 PM</span><span>1/8/2025</span></Clock>
        </Tray>
      </Taskbar>
    </Page>
  );
}

export default App;

const GlobalStyle = createGlobalStyle`
  html, body { margin: 0; padding: 0; background: #f0f0f0; }
  * { box-sizing: border-box; }
`;

const Page = styled.div`
  width: 2560px;
  height: 1440px;
  overflow: hidden;
  display: flex;
  flex-direction: column;
  background: #f0f0f0;
  font-family: ${UI};
  font-size: 15px;
  color: #333;
`;

const Slot = styled.div`
  width: ${(p) => p.$w}px;
  flex: none;
  display: flex;
  align-items: center;
  justify-content: center;
`;

const TitleBar = styled.div`
  height: 60px;
  flex: none;
  display: grid;
  grid-template-columns: 1060px 460px 1fr;
  align-items: center;
`;
const QuickBar = styled.div`
  display: flex;
  align-items: center;
  padding-left: 20px;
`;
const AutoSave = styled.span`
  margin-left: 20px;
  width: 62px;
  color: #a6a6a6;
  font-size: 15px;
`;
const Toggle = styled.div`
  width: 53px;
  height: 25px;
  border: 1.500px solid #c0c0c0;
  border-radius: 13px;
  background: #fff;
  color: #a6a6a6;
  font-size: 15px;
  display: flex;
  align-items: center;
  justify-content: flex-end;
  padding-right: 7px;
  position: relative;
  &::before {
    content: '';
    position: absolute;
    left: 3px;
    top: 3px;
    width: 17px;
    height: 17px;
    border-radius: 50%;
    background: #b4b4b4;
  }
`;
const DocTitle = styled.span`
  margin-left: 15px;
  margin-right: 6px;
  color: #a6a6a6;
  font-size: 15px;
`;
const SearchBox = styled.div`
  height: 40px;
  border: 1px solid #dcdcdc;
  border-bottom: 2px solid #cfcfcf;
  border-radius: 4px;
  background: #efefef;
  display: flex;
  align-items: center;
  gap: 14px;
  padding-left: 16px;
  color: #ababab;
  font-size: 17px;
`;
const WindowBar = styled.div`
  display: flex;
  justify-content: flex-end;
`;
const Avatar = styled.div`
  width: 30px;
  height: 30px;
  border-radius: 50%;
  background: #0b5d4e;
  color: #dcefe9;
  font-size: 13px;
  display: flex;
  align-items: center;
  justify-content: center;
`;
const WinGlyph = styled.div`
  width: 12px;
  height: 1.500px;
  background: #bbb;
`;

const TabBar = styled.div`
  height: 40px;
  flex: none;
  display: flex;
  justify-content: space-between;
`;
const TabList = styled.div`
  display: flex;
  padding-left: 27px;
`;
const RibbonTab = styled.div`
  width: ${(p) => p.$w}px;
  font-size: 16.500px;
  color: #333;
  line-height: 42px;
  position: relative;
  ${(p) => p.$active && css`
    font-weight: 500;
    color: #111;
    &::after {
      content: '';
      position: absolute;
      left: 0;
      top: 32px;
      width: 48px;
      height: 3px;
      border-radius: 2px;
      background: #107c41;
    }
  `}
`;
const TabActions = styled.div`
  display: flex;
  align-items: center;
  height: 30px;
  margin-top: 5px;
`;
const CommentsBtn = styled.div`
  width: 117px;
  height: 30px;
  border: 1px solid #b4b4b4;
  border-radius: 5px;
  background: #fff;
  display: flex;
  align-items: center;
  justify-content: center;
  gap: 5px;
  font-size: 16px;
  color: #333;
`;
const ShareBtn = styled.div`
  width: 89px;
  height: 30px;
  margin-left: 10px;
  border-radius: 5px;
  background: #107c41;
  color: #fff;
  display: flex;
  align-items: center;
  justify-content: center;
  gap: 5px;
  font-size: 16px;
`;

const Ribbon = styled.div`
  height: 124px;
  flex: none;
  margin: 0 10px;
  padding-top: 6px;
  background: #fff;
  border-radius: 9px;
  box-shadow: 0 2px 4px rgba(0, 0, 0, 0.18);
  display: flex;
`;
const Group = styled.div`
  width: ${(p) => p.$w}px;
  height: 110px;
  flex: none;
  border-right: 1px solid #d9d9d9;
  display: flex;
  flex-direction: column;
`;
const Body = styled.div`
  flex: 1;
  display: flex;
  padding-left: ${(p) => p.$pad || 0}px;
  ${(p) => p.$col && css`
    flex-direction: column;
    padding-top: 8px;
    gap: 10px;
  `}
`;
const Label = styled.div`
  height: 17px;
  flex: none;
  text-align: center;
  font-size: 13.500px;
  line-height: 25px;
  color: #444;
  position: relative;
  padding-right: ${(p) => (p.$launcher ? 20 : 0)}px;
`;
const LaunchSpot = styled.span`
  position: absolute;
  right: 3px;
  top: 5px;
  line-height: 0;
`;
const BigBtn = styled.div`
  width: ${(p) => p.$w}px;
  flex: none;
  display: flex;
  flex-direction: column;
  align-items: center;
  font-size: 15px;
  line-height: 20px;
  color: #333;
  white-space: nowrap;
  > span {
    display: flex;
    align-items: center;
    gap: 3px;
    margin-top: ${(p) => (p.$small ? 1 : 0)}px;
  }
`;
const BigIcon = styled.div`
  height: 44px;
  display: flex;
  align-items: center;
  justify-content: center;
`;
const ChevLine = styled.div`
  height: 18px;
  display: flex;
  align-items: center;
`;
const Stack = styled.div`
  margin-left: ${(p) => p.$left}px;
  width: ${(p) => (p.$w ? `${p.$w}px` : 'auto')};
  flex: none;
  display: flex;
  flex-direction: column;
  gap: 4px;
`;
const StackRow = styled.div`
  height: 28px;
  display: flex;
  align-items: center;
  font-size: 15px;
  white-space: nowrap;
  color: #333;
`;
const IconCol = styled.div`
  width: ${(p) => p.$w || 25}px;
  flex: none;
  display: flex;
  align-items: center;
  justify-content: flex-start;
  height: 28px;
`;
const Gap = styled.span`
  width: ${(p) => p.$w}px;
  flex: none;
`;
const ToolRow = styled.div`
  height: 30px;
  display: flex;
  align-items: center;
  ${(p) => p.$tall && css`
    gap: 6px;
    padding-left: 12px;
  `}
`;
const Picker = styled.div`
  width: ${(p) => p.$w}px;
  margin-left: ${(p) => p.$left || 0}px;
  height: 30px;
  flex: none;
  border: 1px solid #8a8a8a;
  border-radius: 5px;
  display: flex;
  align-items: center;
  justify-content: space-between;
  padding: 0 3px;
  font-size: 15px;
  color: #222;
`;
const Tool = styled.div`
  width: ${(p) => p.$w}px;
  height: 30px;
  flex: none;
  display: flex;
  align-items: center;
  justify-content: center;
  gap: 1px;
  color: #444;
  ${(p) => p.$pressed && css`
    background: #f0f0f0;
    border: 1px solid #8a8a8a;
    border-radius: 5px;
  `}
`;
const VSep = styled.div`
  width: ${(p) => p.$w || 6}px;
  height: 30px;
  flex: none;
  display: flex;
  justify-content: center;
  &::after {
    content: '';
    width: 1px;
    background: #d0d0d0;
  }
`;
const GlyphA = styled.span`
  font-size: ${(p) => p.$size}px;
  color: #444;
`;
const BoldGlyph = styled.span`
  font-weight: 700;
  font-size: 17px;
  color: #333;
`;
const ItalicGlyph = styled.span`
  font-style: italic;
  font-size: 18px;
  font-family: "Liberation Serif", serif;
`;
const UnderGlyph = styled.span`
  font-size: 17px;
  text-decoration: underline;
`;
const ColorA = styled.span`
  font-size: 18px;
  line-height: 20px;
  color: #333;
  width: 20px;
  text-align: center;
  border-bottom: 5px solid #0000ff;
`;
const NumGlyph = styled.span`
  font-size: 21px;
  color: #444;
`;
const CommaGlyph = styled.span`
  font-family: "Liberation Serif", serif;
  font-size: 34px;
  font-weight: 700;
  line-height: 14px;
  margin-top: -10px;
  color: #444;
`;
const AlignCol = styled.div`
  width: 170px;
  flex: none;
  display: flex;
  flex-direction: column;
  padding-top: 8px;
  gap: 10px;
  border-right: 1px solid #d9d9d9;
  height: 85px;
`;
const WrapCol = styled(AlignCol)`
  border: 0;
  width: auto;
`;
const WrapText = styled.span`
  font-size: 15px;
  color: #333;
  white-space: nowrap;
`;
const Gallery = styled.div`
  margin: 8px 0 0 1px;
  width: 297px;
  height: 77px;
  flex: none;
  display: flex;
  border: 1px solid #bdbdbd;
  border-radius: 5px;
`;
const StyleGrid = styled.div`
  flex: 1;
  display: grid;
  grid-template-columns: 134px 125px;
  grid-template-rows: 1fr 1fr;
  gap: 3px 4px;
  padding: 2px 0 2px 1px;
`;
const styleTones = {
  normal: css`background: #fff; color: #000; border: 1.500px solid #777; box-shadow: inset 0 0 0 3px #efefef; margin: 0;`,
  bad: css`background: #ffc7ce; color: #9c0006; margin: 4px 0;`,
  good: css`background: #c6efce; color: #006100; margin: 1px 4px 3px;`,
  neutral: css`background: #ffeb9c; color: #9c5700; margin: 1px 0 3px;`,
};
const StyleCell = styled.div`
  ${(p) => styleTones[p.$kind]}
  display: flex;
  align-items: center;
  padding: 2px 0 0 6px;
  font-size: 16.500px;
  font-family: ${CELL};
`;
const GalleryMore = styled.div`
  width: 29px;
  flex: none;
  border-left: 1px solid #555;
  border-radius: 0 5px 5px 0;
  display: flex;
  align-items: center;
  justify-content: center;
`;
const SigmaGlyph = styled.span`
  font-size: 22px;
  color: #444;
  font-family: "Liberation Serif", serif;
`;
const Collapse = styled.div`
  flex: 1;
  display: flex;
  justify-content: flex-end;
  align-items: flex-end;
  height: 110px;
  padding: 0 16px 4px 0;
`;

const FormulaBar = styled.div`
  height: 29px;
  flex: none;
  margin: 10px 10px 9px;
  display: flex;
  align-items: stretch;
`;
const boxed = css`
  background: #fff;
  border: 1px solid #d4d4d4;
  border-radius: 5px;
  box-shadow: 0 1px 1px rgba(0, 0, 0, 0.08);
  display: flex;
  align-items: center;
`;
const NameBox = styled.div`
  ${boxed}
  width: 126px;
  padding: 0 7px;
  justify-content: space-between;
  font-size: 16px;
`;
const Dots = styled.div`
  width: 26px;
  display: flex;
  flex-direction: column;
  align-items: center;
  justify-content: center;
  gap: 3px;
`;
const Dot = styled.span`
  width: 3px;
  height: 3px;
  border-radius: 50%;
  background: #444;
`;
const DotRun = styled.div`
  display: flex;
  flex-direction: ${(p) => (p.$v ? 'column' : 'row')};
  gap: 2.500px;
`;
const FxBox = styled.div`
  ${boxed}
  width: 106px;
  padding: 0 4px 0 8px;
  justify-content: space-between;
`;
const FxGlyph = styled.span`
  font-family: "Liberation Serif", serif;
  font-style: italic;
  font-size: 20px;
  color: #333;
`;
const FormulaInput = styled.div`
  ${boxed}
  flex: 1;
  margin-left: 6px;
  padding: 0 6px 0 12px;
  justify-content: space-between;
  font-size: 15.700px;
`;

const Sheet = styled.div`
  height: 1041px;
  flex: none;
  display: flex;
`;
const GridPane = styled.div`
  width: 2534px;
  flex: none;
  overflow: hidden;
  background: #fff;
  font-family: ${CELL};
  font-size: 14px;
  color: #000;
`;
const gridCols = css`
  display: grid;
  grid-template-columns: 41px 25px 64px 258px repeat(19, 114px);
`;
const ColHead = styled.div`
  ${gridCols}
  height: 20px;
  background: #f0f0f0;
  border-bottom: 1px solid #a8a8a8;
`;
const Gutter = styled.div`
  display: flex;
  align-items: flex-start;
  padding-left: 2px;
`;
const OutlineBtn = styled.div`
  width: 17.500px;
  height: 17px;
  border: 1px solid #a8a8a8;
  background: #e6e6e6;
  color: #666;
  font-size: 12px;
  display: flex;
  align-items: center;
  justify-content: center;
`;
const PlusBtn = styled(OutlineBtn)`
  width: 18px;
  height: 18px;
  font-size: 15px;
  font-weight: 700;
`;
const Corner = styled.div`
  position: relative;
  &::after {
    content: '';
    position: absolute;
    right: 4px;
    bottom: 3px;
    border-style: solid;
    border-width: 0 0 11px 11px;
    border-color: transparent transparent #d6d6d6 transparent;
  }
`;
const ColLetter = styled.div`
  text-align: center;
  line-height: 19px;
  font-size: 13.500px;
  color: #444;
  border-right: 1px solid ${(p) => (p.$freeze ? '#8f8f8f' : '#d2d2d2')};
`;
const SheetRow = styled.div`
  ${gridCols}
  height: ${(p) => p.$h}px;
  ${(p) => p.$freeze && css`border-bottom: 1px solid #9a9a9a;`}
`;
const RowNum = styled.div`
  background: #f0f0f0;
  border-bottom: 1px solid #d8d8d8;
  border-right: 1px solid #d8d8d8;
  color: #555;
  font-size: 13.500px;
  letter-spacing: -0.4px;
  text-align: center;
  line-height: 17px;
`;
const lineOf = { single: '1px solid #000', double: '3px double #000', thick: '2.500px solid #000' };
const lineHeightOf = { single: 16, double: 14, thick: 14 };
const skin = css`
  display: flex;
  align-items: flex-end;
  white-space: nowrap;
  line-height: ${(p) => lineHeightOf[p.$bottom] || 18}px;
  ${(p) => p.$fill && 'background: #f2f2f2;'}
  ${(p) => p.$bold && 'font-weight: 700;'}
  ${(p) => p.$top && 'border-top: 1px solid #000;'}
  ${(p) => p.$bottom && `border-bottom: ${lineOf[p.$bottom]};`}
  ${(p) => p.$band && 'background: #000; color: #fff; font-weight: 700;'}
  ${(p) => p.$note && 'font-style: italic; font-size: 12.500px;'}
`;
const TitleCell = styled.div`
  grid-column: span 2;
  display: flex;
  align-items: flex-end;
  padding-left: 3px;
  font-weight: 700;
  line-height: 18px;
  white-space: nowrap;
  border-right: 1px solid #8f8f8f;
`;
const LabelCell = styled.div`
  ${skin}
  padding-left: ${(p) => p.$indent}px;
  border-right: 1px solid #8f8f8f;
`;
const ValueCell = styled.div`
  ${skin}
  justify-content: flex-end;
  letter-spacing: -0.3px;
  padding-right: ${(p) => p.$pad}px;
`;
const VScroll = styled.div`
  flex: 1;
  background: #f3f3f3;
  display: flex;
  flex-direction: column;
  align-items: center;
  padding: 6px 0 5px;
`;
const Tri = styled.div`
  width: 0;
  height: 0;
  border-left: 6px solid transparent;
  border-right: 6px solid transparent;
  ${(p) => (p.$up ? 'border-bottom: 9px solid #666;' : 'border-top: 9px solid #666;')}
`;
const VThumb = styled.div`
  width: 11px;
  margin-top: 6px;
  height: 935px;
  margin-bottom: auto;
  background: #6b6b6b;
  border-radius: 6px;
`;

const TabStrip = styled.div`
  height: 40px;
  flex: none;
  border-top: 1px solid #d4d4d4;
  background: #f0f0f0;
  display: flex;
  align-items: center;
  padding: 0 0 2px 16px;
`;
const NavArrows = styled.div`
  display: flex;
  align-items: center;
  width: 125px;
`;
const Tabs = styled.div`
  display: flex;
  gap: 11px;
  height: 30px;
`;
const tabTones = {
  purple: css`background: #7030a0; color: #fff;`,
  yellow: css`background: #ffffcc; color: #111;`,
  plain: css`background: transparent; color: #333;`,
  gray: css`background: #7f7f7f; color: #fff;`,
  active: css`
    background: linear-gradient(#f8f8f8, #e6e6e6);
    color: #222;
    height: 35px;
    margin-top: -5px;
    box-shadow: 0 1px 1px rgba(0, 0, 0, 0.2);
    border-bottom: 3px solid #f0f0f0;
    &::before {
      content: '';
      position: absolute;
      left: 9px;
      right: 9px;
      bottom: 2px;
      height: 3px;
      background: #107c41;
    }
  `,
};
const SheetTab = styled.div`
  width: ${(p) => p.$w}px;
  flex: none;
  position: relative;
  border-radius: 5px;
  display: flex;
  align-items: center;
  justify-content: center;
  font-size: 17.200px;
  white-space: nowrap;
  ${(p) => tabTones[p.$tone]}
  &:not(:last-child)::after {
    content: '';
    position: absolute;
    right: -6px;
    top: 4px;
    height: 22px;
    width: 1px;
    background: #cfcfcf;
  }
`;
const HScroll = styled.div`
  width: 145px;
  height: 26px;
  flex: none;
  border-radius: 13px;
  background: #f6f6f6;
  display: flex;
  align-items: center;
  padding: 0 5px;
  gap: 3px;
`;
const HTri = styled.div`
  width: 0;
  height: 0;
  border-top: 6px solid transparent;
  border-bottom: 6px solid transparent;
  ${(p) => (p.$left ? 'border-right: 8px solid #666;' : 'border-left: 8px solid #666; margin-left: auto;')}
`;
const HThumb = styled.div`
  width: 22px;
  height: 16px;
  border-radius: 6px;
  background: #6b6b6b;
`;

const StatusBar = styled.div`
  height: 28px;
  flex: none;
  background: #f3f3f3;
  border-bottom: 1.500px solid #b0b0b0;
  border-top: 1px solid #fff;
  display: flex;
  justify-content: space-between;
`;
const StatusLeft = styled.div`
  display: flex;
  align-items: center;
  padding-left: 14px;
  gap: 22px;
  font-size: 13.500px;
`;
const AccessWrap = styled.div`
  display: flex;
  align-items: center;
  gap: 4px;
  b { font-weight: 700; font-size: 13.500px; }
`;
const StatusRight = styled.div`
  display: flex;
  align-items: center;
  padding-right: 17px;
`;
const ViewBtn = styled.div`
  width: 50px;
  height: 100%;
  display: flex;
  align-items: center;
  justify-content: center;
  ${(p) => p.$active && 'background: #e1e1e1;'}
`;
const ZoomSign = styled.span`
  width: 22px;
  margin-left: 2px;
  text-align: center;
  font-size: 16px;
  color: #444;
`;
const ZoomTrack = styled.div`
  width: 125px;
  height: 1px;
  background: #666;
  position: relative;
`;
const ZoomThumb = styled.div`
  position: absolute;
  left: 47px;
  top: -7px;
  width: 6px;
  height: 14px;
  border-radius: 1px;
  background: #555;
`;
const ZoomTick = styled.div`
  position: absolute;
  left: 63px;
  top: -3px;
  width: 1px;
  height: 7px;
  background: #666;
`;
const ZoomPct = styled.span`
  margin-left: 8px;
  font-size: 13.500px;
  color: #444;
`;

const Taskbar = styled.div`
  flex: 1;
  background: #cfe3f1;
  display: flex;
  align-items: center;
`;
const Weather = styled.div`
  width: 905px;
  flex: none;
  display: flex;
  align-items: center;
  padding-left: 25px;
  gap: 10px;
`;
const CloudWrap = styled.div`
  position: relative;
  width: 30px;
  height: 36px;
  display: flex;
  align-items: flex-end;
`;
const Badge = styled.span`
  position: absolute;
  left: 14px;
  top: -2px;
  width: 19px;
  height: 19px;
  border-radius: 50%;
  background: #c42b1c;
  color: #fff;
  font-size: 13px;
  display: flex;
  align-items: center;
  justify-content: center;
`;
const WeatherText = styled.div`
  display: flex;
  flex-direction: column;
  font-size: 14.500px;
  line-height: 20px;
  color: #222;
  small { font-size: 14.500px; color: #5c6670; }
`;
const TaskSearch = styled.div`
  width: 273px;
  height: 38px;
  margin: 0 3px 0 18px;
  flex: none;
  border-radius: 19px;
  border: 1px solid #b9cfe0;
  background: #f1f6fb;
  display: flex;
  align-items: center;
  padding-left: 14px;
  gap: 10px;
  color: #555;
  font-size: 16px;
  position: relative;
`;
const ShoeSpot = styled.div`
  position: absolute;
  right: 6px;
  top: 2px;
`;
const TaskSlot = styled.div`
  width: 55px;
  height: 50px;
  flex: none;
  position: relative;
  display: flex;
  align-items: center;
  justify-content: center;
  ${(p) => p.$dot && css`
    &::after {
      content: '';
      position: absolute;
      left: 24px;
      bottom: 2px;
      width: 8px;
      height: 4px;
      border-radius: 2px;
      background: #7f8b94;
    }
  `}
`;
const Tray = styled.div`
  flex: 1;
  display: flex;
  align-items: center;
  justify-content: flex-end;
  padding-right: 25px;
  gap: 15px;
`;
const Clock = styled.div`
  margin-left: 10px;
  display: flex;
  flex-direction: column;
  align-items: flex-end;
  font-size: 14.500px;
  line-height: 20px;
  color: #222;
`;
